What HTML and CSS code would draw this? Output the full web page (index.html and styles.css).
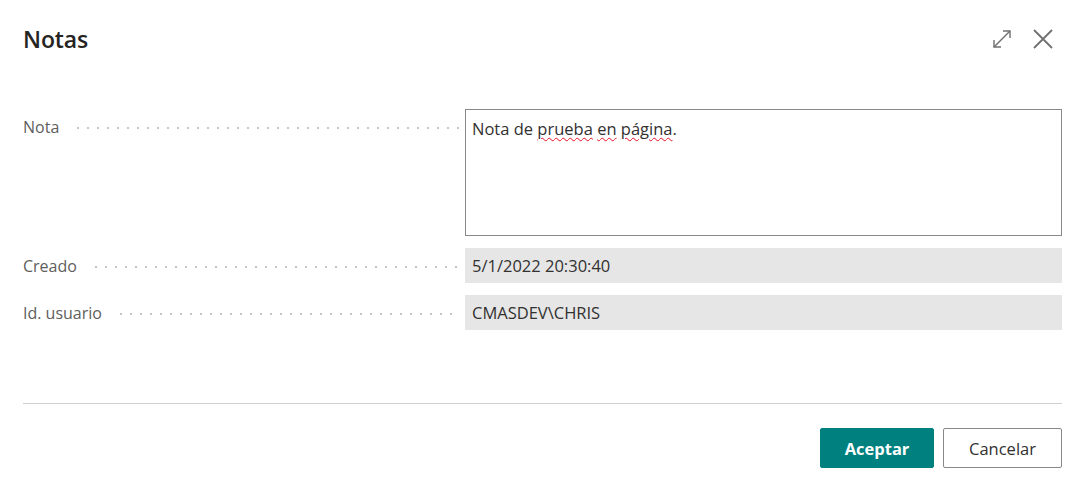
FILE: index.html
```html
<!DOCTYPE html>
<html lang="es">
<head>
<meta charset="utf-8">
<link rel="stylesheet" href="styles.css">
</head>
<body>
<div class="dialog">
  <header class="head">
    <h1 class="title">Notas</h1>
    <div class="tools">
      <svg class="ico" width="22" height="22" viewBox="0 0 22 22" fill="none" stroke="#707070" stroke-width="1.4">
        <path d="M3 19 L19 3"/>
        <path d="M12 3 H19 V10"/>
        <path d="M3 12 V19 H10"/>
      </svg>
      <svg class="ico" width="22" height="22" viewBox="0 0 22 22" fill="none" stroke="#707070" stroke-width="1.8">
        <path d="M2 2 L20 20 M20 2 L2 20"/>
      </svg>
    </div>
  </header>
  <main class="form">
    <div class="row">
      <div class="label"><span>Nota</span><i class="dots"></i></div>
      <div class="area">Nota de <u class="sp">prueba</u> <u class="sp">en</u> <u class="sp">página</u>.</div>
    </div>
    <div class="row">
      <div class="label"><span>Creado</span><i class="dots"></i></div>
      <div class="field">5/1/2022 20:30:40</div>
    </div>
    <div class="row">
      <div class="label"><span>Id. usuario</span><i class="dots"></i></div>
      <div class="field">CMASDEV\CHRIS</div>
    </div>
  </main>
  <footer class="foot">
    <button class="btn primary">Aceptar</button>
    <button class="btn">Cancelar</button>
  </footer>
</div>
</body>
</html>
```
FILE: styles.css
```css
* { box-sizing: border-box; }
html, body { margin: 0; background: #fff; }
body { font-family: "Open Sans", "Noto Sans", sans-serif; color: #323130; }
.dialog { width: 1082px; height: 487px; padding: 0 20px 0 23px; display: flex; flex-direction: column; }
.head { height: 78px; display: flex; align-items: center; justify-content: space-between; }
.title { margin: 0; font-size: 23px; font-weight: 600; color: #252423; letter-spacing: -0.1px; }
.tools { display: flex; gap: 19px; align-items: center; margin-right: 8px; margin-top: -1px; }
.ico { display: block; }
.form { display: flex; flex-direction: column; gap: 12px; padding-top: 31px; height: 326px; border-bottom: 1px solid #d2d0ce; }
.row { display: flex; align-items: flex-start; }
.label { width: 442px; display: flex; align-items: center; height: 35px; font-size: 16px; color: #605e5c; }
.label span { flex: none; }
.dots { flex: 1; height: 2px; margin: 2px 6px 0 14px; background-image: radial-gradient(circle, #c8c6c4 0.8px, transparent 1.1px); background-size: 10px 2px; background-repeat: repeat-x; }
.area { width: 597px; height: 127px; border: 1px solid #8a8886; padding: 8px 6px; font-size: 16.5px; color: #323130; line-height: 21px; }
.sp { text-decoration: underline wavy #e81123; text-decoration-thickness: 1px; text-underline-offset: 2px; }
.field { width: 597px; height: 35px; background: #e6e6e6; padding: 0 7px; display: flex; align-items: center; font-size: 16.5px; color: #323130; }
.foot { display: flex; justify-content: flex-end; gap: 9px; padding-top: 24px; }
.btn { height: 40px; font-family: inherit; font-size: 16.5px; border-radius: 2px; border: 1px solid #8a8886; background: #fff; color: #323130; width: 119px; padding: 0; cursor: pointer; }
.btn.primary { background: #00817f; border-color: #00817f; color: #fff; font-weight: 700; width: 114px; }
```
